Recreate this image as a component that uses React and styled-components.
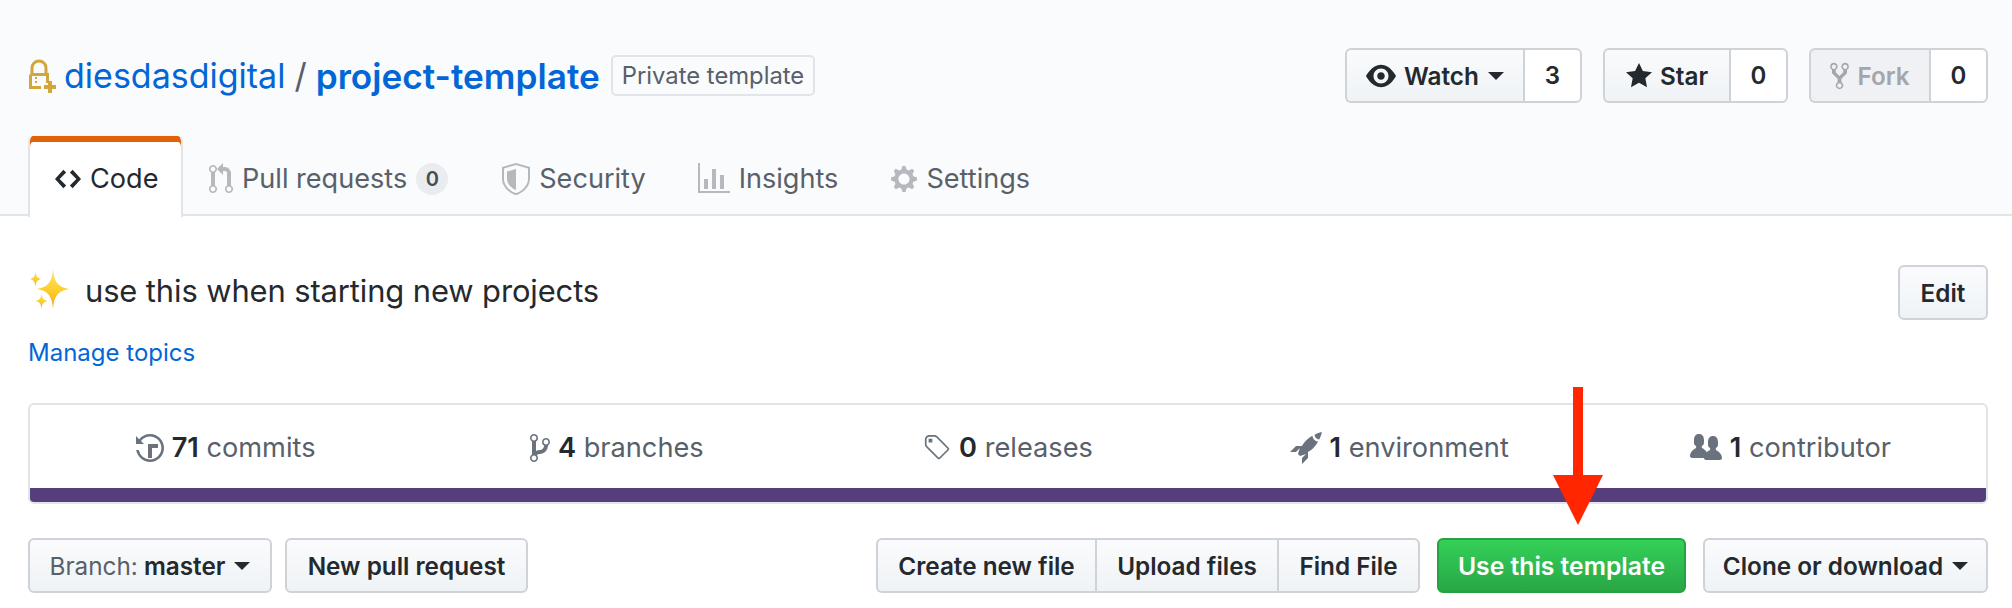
import React from "react";
import styled, { createGlobalStyle } from "styled-components";

const GlobalStyle = createGlobalStyle`
  html, body {
    margin: 0;
    background: #fff;
  }
  body {
    font-family: Inter, "Liberation Sans", sans-serif;
    color: #24292e;
    font-size: 24px;
  }
`;

const Page = styled.div`
  position: relative;
  width: 2012px;
  height: 608px;
  overflow: hidden;
`;

const Head = styled.header`
  background: #fafbfc;
  border-bottom: 2px solid #e1e4e8;
  padding: 48px 24px 0 28px;
  height: 166px;
`;

const TitleRow = styled.div`
  display: flex;
  align-items: center;
  justify-content: space-between;
  height: 55px;
  margin-bottom: 33px;
`;

const Title = styled.h1`
  display: flex;
  align-items: center;
  margin: 0;
  font-size: 34px;
  font-weight: 400;
`;

const LockIcon = styled.svg`
  width: 28px;
  height: 34px;
  margin-right: 8px;
`;

const Owner = styled.a`
  color: #0366d6;
`;

const Slash = styled.span`
  color: #586069;
  margin: 0 9px;
`;

const Repo = styled.a`
  color: #0366d6;
  font-size: 35.2px;
  font-weight: 600;
`;

const Label = styled.span`
  font-size: 23.8px;
  color: #586069;
  border: 2px solid #e1e4e8;
  border-radius: 5px;
  padding: 4px 9px;
  margin-left: 11px;
  line-height: 29px;
`;

const Actions = styled.div`
  display: flex;
  gap: 21px;
`;

const Group = styled.div`
  display: flex;
`;

const Button = styled.button`
  display: flex;
  align-items: center;
  justify-content: center;
  gap: 8px;
  box-sizing: border-box;
  height: 55px;
  width: ${(p) => p.$w}px;
  padding: 0;
  font: 600 24.3px Inter, "Liberation Sans", sans-serif;
  color: ${(p) => (p.$muted ? "#a3a7ab" : "#24292e")};
  background: ${(p) =>
    p.$muted ? "#eff1f4" : "linear-gradient(#fafbfc, #eff3f6)"};
  border: 2px solid #cfd2d6;
  border-radius: 6px;
  white-space: nowrap;

  ${Group} > &:not(:last-child) {
    border-radius: 6px 0 0 6px;
    border-right: 0;
  }
  ${Group} > &:not(:first-child):not(:last-child) {
    border-radius: 0;
    border-right: 0;
  }
  ${Group} > &:last-child:not(:first-child) {
    border-radius: 0 6px 6px 0;
  }
`;

const Count = styled.span`
  display: flex;
  align-items: center;
  justify-content: center;
  box-sizing: border-box;
  width: 59px;
  height: 55px;
  background: #fff;
  font-weight: 600;
  font-size: 24px;
  border: 2px solid #cfd2d6;
  border-radius: 0 6px 6px 0;
`;

const Caret = styled.i`
  display: inline-block;
  width: 0;
  height: 0;
  margin-left: 1px;
  border-top: 8px solid #24292e;
  border-left: 8px solid transparent;
  border-right: 8px solid transparent;
`;

const Tabs = styled.nav`
  display: flex;
  height: 81px;
`;

const Tab = styled.a`
  display: flex;
  align-items: center;
  box-sizing: border-box;
  height: 81px;
  padding: 4px 26px 0;
  gap: 9px;
  font-size: 27.1px;
  color: #586069;
  margin-right: ${(p) => p.$mr || 0}px;
`;

const ActiveTab = styled(Tab)`
  width: 155px;
  padding: 4px 0 0 25px;
  color: #24292e;
  background: #fff;
  border: 2px solid #e1e4e8;
  border-top: 0;
  border-bottom: 0;
  border-radius: 5px 5px 0 0;
  box-shadow: inset 0 6px 0 #e36209;
`;

const Badge = styled.span`
  display: flex;
  align-items: center;
  justify-content: center;
  width: 32px;
  height: 32px;
  border-radius: 50%;
  background: #eaecef;
  color: #444d56;
  font-size: 20px;
  font-weight: 600;
`;

const Main = styled.main`
  padding: 49px 24px 0 28px;
`;

const DescRow = styled.div`
  display: flex;
  align-items: center;
  justify-content: space-between;
`;

const Desc = styled.div`
  display: flex;
  align-items: center;
  gap: 15px;
  padding-bottom: 5px;
  font-size: 30.9px;
  letter-spacing: -0.1px;
`;

const Sparkle = styled.svg`
  width: 42px;
  height: 42px;
`;

const Topics = styled.a`
  display: block;
  margin-top: 18px;
  line-height: 30px;
  color: #0366d6;
  font-size: 24px;
`;

const Stats = styled.section`
  box-sizing: border-box;
  height: 101px;
  margin-top: 35px;
  border: 2px solid #e1e4e8;
  border-radius: 6px;
  overflow: hidden;
`;

const StatGrid = styled.div`
  display: grid;
  grid-template-columns: repeat(5, 1fr);
  height: 83px;
`;

const Stat = styled.div`
  display: flex;
  align-items: center;
  justify-content: center;
  gap: 8px;
  padding-top: 2px;
  font-size: 27.2px;
  color: #586069;

  b {
    color: #24292e;
    font-weight: 600;
  }
`;

const LangBar = styled.div`
  height: 16px;
  background: #563d7c;
`;

const FileRow = styled.div`
  display: flex;
  align-items: center;
  justify-content: space-between;
  margin-top: 34px;
`;

const Cluster = styled.div`
  display: flex;
  gap: ${(p) => p.$gap}px;
`;

const Light = styled.span`
  font-weight: 400;
  color: #586069;
`;

const GreenButton = styled(Button)`
  font-size: 24.7px;
  color: #fff;
  background: linear-gradient(#34d058, #28a745);
  border-color: #27a243;
`;

const Arrow = styled.svg`
  position: absolute;
  left: 1553px;
  top: 387px;
  width: 50px;
  height: 138px;
`;

const Octicon = ({ w, h, vw = 16, fill = "#6a737d", d }) => (
  <svg width={w} height={h} viewBox={`0 0 ${vw} 16`} fill={fill} style={{ flexShrink: 0 }}>
    <path fillRule="evenodd" d={d} />
  </svg>
);

const paths = {
  code: "M9.5 3L8 4.5 11.5 8 8 11.5 9.5 13 14 8 9.5 3zm-5 0L0 8l4.5 5L6 11.5 2.5 8 6 4.5 4.5 3z",
  pull: "M11 11.28V5c-.03-.78-.34-1.47-.94-2.06C9.46 2.35 8.78 2.03 8 2H7V0L4 3l3 3V4h1c.27.02.48.11.69.31.21.2.3.42.31.69v6.28A1.993 1.993 0 0 0 10 15a1.993 1.993 0 0 0 1-3.72zm-1 2.92c-.66 0-1.2-.55-1.2-1.2 0-.65.55-1.2 1.2-1.2.65 0 1.2.55 1.2 1.2 0 .65-.55 1.2-1.2 1.2zM4 3c0-1.11-.89-2-2-2a1.993 1.993 0 0 0-1 3.72v6.56A1.993 1.993 0 0 0 2 15a1.993 1.993 0 0 0 1-3.72V4.72c.59-.34 1-.98 1-1.72zm-.8 10c0 .66-.55 1.2-1.2 1.2-.65 0-1.2-.55-1.2-1.2 0-.65.55-1.2 1.2-1.2.65 0 1.2.55 1.2 1.2zM2 4.2C1.34 4.2.8 3.65.8 3c0-.65.55-1.2 1.2-1.2.65 0 1.2.55 1.2 1.2 0 .65-.55 1.2-1.2 1.2z",
  shield: "M7 0L0 2v6.02C0 12.69 5.31 16 7 16c1.69 0 7-3.31 7-7.98V2L7 0zm0 1.05l6 1.7v5.27C13 12 8.4 15 7 15c-1.4 0-6-3-6-6.98V2.75l6-1.7zM7 3L2.5 4.2v3.82C2.5 11 5.9 13.3 7 13.5V3z",
  graph: "M16 14v1H0V0h1v14h15zM5 13H3V8h2v5zm4 0H7V3h2v10zm4 0h-2V6h2v7z",
  gear: "M14 8.77v-1.6l-1.94-.64-.45-1.09.88-1.84-1.13-1.13-1.81.91-1.09-.45-.69-1.92h-1.6l-.63 1.94-1.11.45-1.84-.88-1.13 1.13.91 1.81-.45 1.09L0 7.23v1.59l1.94.64.45 1.09-.88 1.84 1.13 1.13 1.81-.91 1.09.45.69 1.92h1.59l.63-1.94 1.11-.45 1.84.88 1.13-1.13-.92-1.81.47-1.09L14 8.75v.02zM7 11c-1.66 0-3-1.34-3-3s1.34-3 3-3 3 1.34 3 3-1.34 3-3 3z",
  eye: "M8.06 2C3 2 0 8 0 8s3 6 8.06 6C13 14 16 8 16 8s-3-6-7.94-6zM8 12c-2.2 0-4-1.78-4-4 0-2.2 1.8-4 4-4 2.22 0 4 1.8 4 4 0 2.22-1.78 4-4 4zm2-4c0 1.11-.89 2-2 2-1.11 0-2-.89-2-2 0-1.11.89-2 2-2 1.11 0 2 .89 2 2z",
  star: "M14 6l-4.9-.64L7 1 4.9 5.36 0 6l3.6 3.26L2.67 14 7 11.67 11.33 14l-.93-4.74L14 6z",
  fork: "M8 1a1.993 1.993 0 0 0-1 3.72V6L5 8 3 6V4.72A1.993 1.993 0 0 0 2 1a1.993 1.993 0 0 0-1 3.72V6.5l3 3v1.78A1.993 1.993 0 0 0 5 15a1.993 1.993 0 0 0 1-3.72V9.5l3-3V4.72A1.993 1.993 0 0 0 8 1zM2 4.2C1.34 4.2.8 3.65.8 3c0-.65.55-1.2 1.2-1.2.65 0 1.2.55 1.2 1.2 0 .65-.55 1.2-1.2 1.2zm3 10c-.66 0-1.2-.55-1.2-1.2 0-.65.55-1.2 1.2-1.2.65 0 1.2.55 1.2 1.2 0 .65-.55 1.2-1.2 1.2zm3-10c-.66 0-1.2-.55-1.2-1.2 0-.65.55-1.2 1.2-1.2.65 0 1.2.55 1.2 1.2 0 .65-.55 1.2-1.2 1.2z",
  history: "M8 13H6V6h5v2H8v5zM7 1C4.81 1 2.87 2.02 1.59 3.59L0 2v4h4L2.5 4.5C3.55 3.17 5.17 2.3 7 2.3c3.14 0 5.7 2.56 5.7 5.7s-2.56 5.7-5.7 5.7A5.71 5.71 0 0 1 1.4 9H.08c.62 3.39 3.6 6 6.92 6 3.86 0 7-3.14 7-7s-3.14-7-7-7z",
  branch: "M10 5c0-1.11-.89-2-2-2a1.993 1.993 0 0 0-1 3.72v.3c-.02.52-.23.98-.63 1.38-.4.4-.86.61-1.38.63-.83.02-1.48.16-2 .45V4.72a1.993 1.993 0 0 0-1-3.72C.88 1 0 1.89 0 3a2 2 0 0 0 1 1.72v6.56c-.59.35-1 .99-1 1.72 0 1.11.89 2 2 2 1.11 0 2-.89 2-2 0-.53-.2-1-.53-1.36.09-.06.48-.41.59-.47.25-.11.56-.17.94-.17 1.05-.05 1.95-.45 2.75-1.25S8.95 7.77 9 6.73h-.02C9.59 6.37 10 5.73 10 5zM2 1.8c.66 0 1.2.55 1.2 1.2 0 .65-.55 1.2-1.2 1.2C1.35 4.2.8 3.65.8 3c0-.65.55-1.2 1.2-1.2zm0 12.41c-.66 0-1.2-.55-1.2-1.2 0-.65.55-1.2 1.2-1.2.65 0 1.2.55 1.2 1.2 0 .65-.55 1.2-1.2 1.2zm6-8c-.66 0-1.2-.55-1.2-1.2 0-.65.55-1.2 1.2-1.2.65 0 1.2.55 1.2 1.2 0 .65-.55 1.2-1.2 1.2z",
  tag: "M7.73 1.73C7.26 1.26 6.62 1 5.96 1H3.5C2.13 1 1 2.13 1 3.5v2.47c0 .66.27 1.3.73 1.77l6.06 6.06c.39.39 1.02.39 1.41 0l4.59-4.59a.996.996 0 0 0 0-1.41L7.73 1.73zM2.38 7.09c-.31-.3-.47-.7-.47-1.13V3.5c0-.88.72-1.59 1.59-1.59h2.47c.42 0 .83.16 1.13.47l6.14 6.13-4.73 4.73-6.13-6.15zM3.01 3h2v2H3V3h.01z",
  rocket: "M12.17 3.83c-.27-.27-.47-.55-.63-.88-.16-.31-.27-.66-.34-1.02-.58.33-1.16.7-1.73 1.13-.58.44-1.14.94-1.69 1.48-.7.7-1.33 1.81-1.78 2.45H3L0 10h3l2-2c-.34.77-1.02 2.98-1 3l1 1c.02.02 2.23-.64 3-1l-2 2v3l3-3v-3c.64-.45 1.75-1.09 2.45-1.78.55-.55 1.05-1.13 1.47-1.7.44-.58.81-1.16 1.14-1.72-.36-.08-.7-.19-1.03-.34a3.39 3.39 0 0 1-.86-.63zM16 0s-.09.38-.3 1.06c-.2.7-.55 1.58-1.06 2.66-.7-.08-1.27-.33-1.66-.7-.39-.39-.63-.94-.7-1.66C13.36.86 14.24.5 14.94.3 15.62.11 16 0 16 0z",
  people: "M16 12.999c0 .439-.45 1-1 1H7.995c-.539 0-.994-.447-.995-.999H1c-.54 0-1-.561-1-1 0-2.634 3-4 3-4s.229-.409 0-1c-.841-.621-1.058-.59-1-3 .058-2.419 1.367-3 2.5-3s2.442.58 2.5 3c.058 2.41-.159 2.379-1 3-.229.59 0 1 0 1s1.549.711 2.42 2.088C9.196 9.369 10 8.999 10 8.999s.229-.409 0-1c-.841-.62-1.058-.59-1-3 .058-2.419 1.367-3 2.5-3s2.437.581 2.495 3c.059 2.41-.158 2.38-1 3-.229.59 0 1 0 1s3.005 1.366 3.005 4z",
};

export default function App() {
  return (
    <Page>
      <GlobalStyle />
      <Head>
        <TitleRow>
          <Title>
            <LockIcon viewBox="0 0 28 34">
              <path d="M4 15V9a7 7 0 0 1 14 0v6" fill="none" stroke="#d3a63b" strokeWidth="3" />
              <path d="M2.5 15.500h17V24M13 28.500H2.500v-13" fill="none" stroke="#d3a63b" strokeWidth="3" />
              <path d="M7 18h2v2H7zM7 22h2v2H7z" fill="#d3a63b" />
              <path d="M20 22h4v4h4v4h-4v4h-4v-4h-4v-4h4z" fill="#d3a63b" />
            </LockIcon>
            <Owner>diesdasdigital</Owner>
            <Slash>/</Slash>
            <Repo>project-template</Repo>
            <Label>Private template</Label>
          </Title>
          <Actions>
            <Group>
              <Button $w={178}>
                <Octicon w={30} h={30} fill="#24292e" d={paths.eye} />
                Watch
                <Caret />
              </Button>
              <Count>3</Count>
            </Group>
            <Group>
              <Button $w={126}>
                <Octicon w={26} h={30} vw={14} fill="#24292e" d={paths.star} />
                Star
              </Button>
              <Count>0</Count>
            </Group>
            <Group>
              <Button $w={120} $muted>
                <Octicon w={19} h={30} vw={10} fill="#a3a7ab" d={paths.fork} />
                Fork
              </Button>
              <Count>0</Count>
            </Group>
          </Actions>
        </TitleRow>
        <Tabs>
          <ActiveTab>
            <Octicon w={26} h={30} vw={14} fill="#24292e" d={paths.code} />
            Code
          </ActiveTab>
          <Tab $mr={2}>
            <Octicon w={24} h={32} vw={12} fill="#b5b9bd" d={paths.pull} />
            Pull requests
            <Badge>0</Badge>
          </Tab>
          <Tab>
            <Octicon w={28} h={32} vw={14} fill="#b5b9bd" d={paths.shield} />
            Security
          </Tab>
          <Tab $mr={1}>
            <Octicon w={32} h={32} fill="#b5b9bd" d={paths.graph} />
            Insights
          </Tab>
          <Tab>
            <Octicon w={26} h={30} vw={14} fill="#b5b9bd" d={paths.gear} />
            Settings
          </Tab>
        </Tabs>
      </Head>
      <Main>
        <DescRow>
          <Desc>
            <Sparkle viewBox="0 0 42 42">
              <defs>
                <linearGradient id="spark" x1="0" y1="0" x2="0" y2="1">
                  <stop offset="0" stopColor="#ffe27a" />
                  <stop offset="0.5" stopColor="#fdd02f" />
                  <stop offset="1" stopColor="#f5a623" />
                </linearGradient>
              </defs>
              <path d="M25 0c1 12 4 18 16 20-12 2-15 8-16 20-1-12-4-18-16-20 12-2 15-8 16-20z" fill="url(#spark)" />
              <path d="M7.500 2c.5 5 1.500 7 5.500 8-4 1-5 3-5.500 8-.5-5-1.500-7-5.500-8 4-1 5-3 5.500-8z" fill="url(#spark)" />
              <path d="M13.500 24c.5 5 1.500 7 6 8-4.500 1-5.500 3-6 8-.5-5-1.500-7-6-8 4.500-1 5.500-3 6-8z" fill="url(#spark)" />
            </Sparkle>
            use this when starting new projects
          </Desc>
          <Button $w={90}>Edit</Button>
        </DescRow>
        <Topics>Manage topics</Topics>
        <Stats>
          <StatGrid>
            <Stat>
              <Octicon w={28} h={32} vw={14} d={paths.history} />
              <span><b>71</b> commits</span>
            </Stat>
            <Stat>
              <Octicon w={20} h={32} vw={10} d={paths.branch} />
              <span><b>4</b> branches</span>
            </Stat>
            <Stat>
              <Octicon w={28} h={30} vw={15} d={paths.tag} />
              <span><b>0</b> releases</span>
            </Stat>
            <Stat>
              <Octicon w={32} h={32} d={paths.rocket} />
              <span><b>1</b> environment</span>
            </Stat>
            <Stat>
              <Octicon w={32} h={32} d={paths.people} />
              <span><b>1</b> contributor</span>
            </Stat>
          </StatGrid>
          <LangBar />
        </Stats>
        <FileRow>
          <Cluster $gap={13}>
            <Button $w={244}>
              <span><Light>Branch:</Light> master</span>
              <Caret />
            </Button>
            <Button $w={243}>New pull request</Button>
          </Cluster>
          <Cluster $gap={17}>
            <Group>
              <Button $w={219}>Create new file</Button>
              <Button $w={182}>Upload files</Button>
              <Button $w={143}>Find File</Button>
            </Group>
            <GreenButton $w={249}>Use this template</GreenButton>
            <Button $w={285}>
              Clone or download
              <Caret />
            </Button>
          </Cluster>
        </FileRow>
      </Main>
      <Arrow viewBox="0 0 50 138">
        <path d="M20 0h10v88h20l-25 50L0 88h20z" fill="#ff2600" />
      </Arrow>
    </Page>
  );
}
